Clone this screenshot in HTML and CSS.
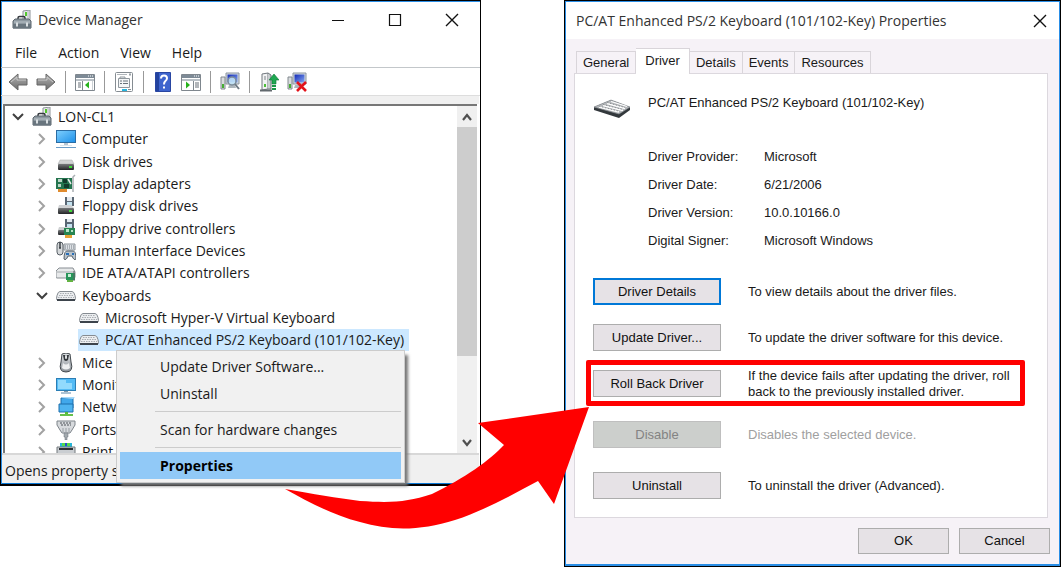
FILE: index.html
```html
<!DOCTYPE html>
<html lang="en">
<head>
<meta charset="utf-8">
<title>Device Manager</title>
<link rel="stylesheet" href="styles.css">
</head>
<body>
<svg class="defs" aria-hidden="true">
  <defs>
    <linearGradient id="gMetal" x1="0" y1="0" x2="0" y2="1"><stop offset="0" stop-color="#dfe3e6"/><stop offset="1" stop-color="#8b9197"/></linearGradient>
    <linearGradient id="gDark" x1="0" y1="0" x2="0" y2="1"><stop offset="0" stop-color="#77797b"/><stop offset="1" stop-color="#222426"/></linearGradient>
    <linearGradient id="gScreen" x1="0" y1="0" x2="1" y2="1"><stop offset="0" stop-color="#7fd0ff"/><stop offset="1" stop-color="#1c8fe8"/></linearGradient>
    <linearGradient id="gNavy" x1="0" y1="0" x2="1" y2="1"><stop offset="0" stop-color="#1229b5"/><stop offset="1" stop-color="#86a8f2"/></linearGradient>
    <linearGradient id="gArrow" x1="0" y1="0" x2="0" y2="1"><stop offset="0" stop-color="#b4b4b4"/><stop offset="1" stop-color="#6b6b6b"/></linearGradient>
  </defs>
  <symbol id="i-box" viewBox="0 0 20 20">
    <path d="M11 1l7-1v14h-7z" fill="#e9ebed" stroke="#8d9398"/><path d="M13 2h2v4h-2z" fill="#52c82c"/><path d="M16 1v12" stroke="#b5babd"/>
    <path d="M6 10V8q0-1.500 1.500-1.500h4Q13 6.500 13 8v2" fill="none" stroke="#34393e" stroke-width="1.500"/>
    <path d="M1 11l2-2h14l2 2v7H1z" fill="#8d98a0" stroke="#5d666e"/><path d="M2 12h16" stroke="#b9c2c8"/><path d="M1 14h18v4.500H1z" fill="#69757e"/><path d="M4 12.500h2v4H4zM14 12.500h2v4h-2z" fill="#dadfe2"/>
  </symbol>
  <symbol id="i-pc" viewBox="0 0 20 20">
    <rect x=".5" y="1.500" width="19" height="12" fill="url(#gScreen)" stroke="#2b6ca3"/><path d="M8 14h4v2H8z" fill="#b7c6d3"/><path d="M4 16h12v1H4z" fill="#dce6ee"/><path d="M0 18h20v1H0z" fill="#6a9cc7"/>
  </symbol>
  <symbol id="i-disk" viewBox="0 0 20 20">
    <path d="M4 8h12l2 4H2z" fill="#d2d3d4" stroke="#a6a8aa" stroke-width=".5"/><rect x="2" y="12" width="16" height="6" rx="1" fill="url(#gDark)"/><path d="M13 14h3v2h-3z" fill="#41dc3a"/>
  </symbol>
  <symbol id="i-display" viewBox="0 0 20 20">
    <path d="M0 4h16v11H0z" fill="#24744e"/><path d="M2 5h4v3H2zM2 10h3v3H2z" fill="#bcd5c7"/><path d="M7 5h4v4H7zM8 10h5v4H8z" fill="#123c2c"/><path d="M12 5l3 5" stroke="#e4ece8" stroke-width="1.500"/><path d="M2 15h9v3H2z" fill="#e08b2e"/><path d="M19 1l-2 2v15" fill="none" stroke="#a9afb3" stroke-width="1.500"/>
  </symbol>
  <symbol id="i-fdd" viewBox="0 0 20 20">
    <path d="M9 1h9v9H9z" fill="#596673"/><path d="M11 1h5v4h-5z" fill="#e3eaf0"/><path d="M11 6h5v4h-5z" fill="#c3e2f0"/>
    <path d="M3 9h12l3 3H2z" fill="#cfd1d3"/><rect x="2" y="12" width="16" height="6" rx="1" fill="url(#gDark)"/><path d="M13 14h3v2h-3z" fill="#41dc3a"/>
  </symbol>
  <symbol id="i-fdc" viewBox="0 0 20 20">
    <path d="M9 0h9v9H9z" fill="#596673"/><path d="M11 0h5v3h-5z" fill="#e3eaf0"/><path d="M11 5h5v4h-5z" fill="#c3e2f0"/>
    <path d="M3 8h12l3 3H2z" fill="#cfd1d3"/><rect x="2" y="11" width="15" height="5" rx="1" fill="url(#gDark)"/><path d="M8 9h11v7H8z" fill="#278552"/><path d="M10 10h3v3h-3zM15 11h2v2h-2z" fill="#b6e4c6"/><path d="M9 16h7v3H9z" fill="#e7a335"/>
  </symbol>
  <symbol id="i-hid" viewBox="0 0 20 20">
    <path d="M8 3h11v6H8z" fill="#dde1e5" stroke="#8f969c"/><path d="M9 5h9M9 7h9" stroke="#747d84" stroke-dasharray="1 1"/>
    <rect x="1" y="1" width="6" height="13" rx="3" fill="#d5d8da" stroke="#596067"/><path d="M4 1v6M3 7h2" stroke="#3c4147" stroke-width="1.500"/>
    <path d="M8 18q0-9 4-8h4q4-1 4 8q-2 2-4-3h-4q-2 5-4 3z" fill="#b9c3cb" stroke="#566069"/><path d="M10 13h3M16 13h2" stroke="#286fb9" stroke-width="2"/>
  </symbol>
  <symbol id="i-ide" viewBox="0 0 20 20">
    <path d="M3 5h14l2 4v5q0 1-1 1H1q-1 0-1-1V8z" fill="#e7e9ea" stroke="#878d92"/><path d="M1 9h17" stroke="#a5aaae"/><path d="M10 10h9v7h-9z" fill="#28955a"/><path d="M12 11h3v3h-3z" fill="#c8eed6"/><path d="M18 8v10" stroke="#5c6569"/><path d="M11 17h6v2h-6z" fill="#63b343"/>
  </symbol>
  <symbol id="i-kbd" viewBox="0 0 20 20">
    <path d="M4 5.500h12q2 0 3 4l.5 3q0 2-2 2h-15q-2 0-2-2l.5-3q1-4 3-4z" fill="#eceef0" stroke="#858b91"/><path d="M4 7.500h12M3 9.500h14M2 11.500h16" stroke="#a9adb2" stroke-dasharray="1.500 1"/><path d="M1 14h18" stroke="#3d444c" stroke-width="2"/>
  </symbol>
  <symbol id="i-mouse" viewBox="0 0 20 20">
    <path d="M6 1q4-2 8 0l1 8q3 10-5 10T5 9z" fill="url(#gMetal)" stroke="#43484d"/><path d="M7 2l1 5q2 2 4 0l1-5" fill="#35393d"/><rect x="9" y="2" width="2" height="4" rx="1" fill="#dce0e2"/><path d="M7 10q3 3 6 0l1 5q-4 3-8 0z" fill="#eef0f1"/>
  </symbol>
  <symbol id="i-mon" viewBox="0 0 20 20">
    <rect x=".5" y="3.500" width="19" height="12" fill="#54bbf5" stroke="#2b7eb5"/><path d="M2 5h8v3h6v6H2z" fill="#92dafd"/><path d="M8 16h4v1H8z" fill="#8299aa"/><path d="M5 18h10" stroke="#5b87aa"/>
  </symbol>
  <symbol id="i-net" viewBox="0 0 20 20">
    <path d="M5 1h12v10H5z" fill="#41a8eb" stroke="#1c6eac"/><path d="M5 1l2-1h12l-2 2z" fill="#a5d9fa"/><path d="M3 7h14v8H3z" fill="#4fb4f0" stroke="#1c6eac"/><path d="M9 15h3v2H9z" fill="#56bc3a"/><path d="M4 17h13v2H4z" fill="#66c04a"/>
  </symbol>
  <symbol id="i-port" viewBox="0 0 20 20">
    <path d="M1 1h18v4l-3 5-2 3H6L4 10 1 5z" fill="#d7dadd" stroke="#7e858b"/><path d="M4 3h12M5 5h10" stroke="#4c5359" stroke-dasharray="2 1"/><path d="M7 8v4M10 8v4M13 8v4" stroke="#989fa4"/><path d="M8 13h4v4h-1v3H9v-3H8z" fill="#a2a9ae" stroke="#6b7278" stroke-width=".5"/>
  </symbol>
  <symbol id="i-print" viewBox="0 0 20 20">
    <path d="M4 1h12v4H4z" fill="#25b6d8"/><path d="M6 1h8v3H6z" fill="#53d94a"/><path d="M9 1h2v3H9z" fill="#254ccf"/><path d="M1 5h18v9H1z" fill="#c9cdd1" stroke="#72787d"/><path d="M3 6h14v2H3z" fill="#2b2f33"/>
  </symbol>
  <symbol id="i-back" viewBox="0 0 20 20"><path d="M1 10l9-8v5h9v6h-9v5z" fill="url(#gArrow)" stroke="#666" stroke-linejoin="round"/><path d="M3 10l6-5v3h9" fill="none" stroke="#c9c9c9"/></symbol>
  <symbol id="i-fwd" viewBox="0 0 20 20"><path d="M19 10l-9-8v5H1v6h9v5z" fill="url(#gArrow)" stroke="#666" stroke-linejoin="round"/><path d="M17 10l-6-5v3H2" fill="none" stroke="#c9c9c9"/></symbol>
  <symbol id="i-tree" viewBox="0 0 20 20"><path d="M.500 2.500h19v16H.500z" fill="#fff" stroke="#7f878e"/><path d="M1 3h18v3H1z" fill="#7d8a96"/><path d="M13 4h1M15 4h1M17 4h1" stroke="#fff"/><path d="M1 7h18v2H1z" fill="#b9c0c6"/><path d="M7.500 9v9" stroke="#7f878e"/><path d="M3 11h3M3 13h3M3 15h3" stroke="#666f77"/><path d="M14 9.500v7L10 13z" fill="#27b21c"/><path d="M17.500 9v9" stroke="#ccd1d5"/></symbol>
  <symbol id="i-pane" viewBox="0 0 20 20"><path d="M.500 2.500h19v16H.500z" fill="#fff" stroke="#7f878e"/><path d="M1 3h18v3H1z" fill="#7d8a96"/><path d="M13 4h1M15 4h1M17 4h1" stroke="#fff"/><path d="M1 7h18v2H1z" fill="#b9c0c6"/><path d="M12.500 9v9" stroke="#7f878e"/><path d="M14 11h4M14 13h4M14 15h4" stroke="#666f77"/><path d="M5 9.500v7L9 13z" fill="#27b21c"/></symbol>
  <symbol id="i-prop" viewBox="0 0 20 20"><rect x="1.500" y=".5" width="17" height="19" rx="1" fill="#fff" stroke="#858c92"/><path d="M3 2.500h10" stroke="#b0b6bb"/><path d="M15 1.500h2v2h-2z" fill="#9aa1a7"/><path d="M4.500 6.500h11v9h-11zM6 6V5h5v1" fill="#f4f6f7" stroke="#8f979d"/><path d="M6 9h2M9 9h5M6 11.500h2M9 11.500h5" stroke="#68727a"/><path d="M8 17h5v2H8z" fill="#24b5df"/><path d="M14 17.500h3" stroke="#858c92"/></symbol>
  <symbol id="i-help" viewBox="0 0 16 20"><path d="M.500.500h15v19H.500z" fill="#3e64cd" stroke="#2946a2"/><path d="M1 1h3v18H1z" fill="#23439f"/><path d="M6 6.500Q6 3.500 9 3.500t3 2.800Q12 8 10 9.500 9 10.500 9 12.500" fill="none" stroke="#fff" stroke-width="2"/><path d="M8 14.500h2v2H8z" fill="#fff"/></symbol>
  <symbol id="i-scan" viewBox="0 0 20 20"><path d="M6 1h13v11H6z" fill="#d5dbe1" stroke="#8b959e"/><path d="M7.500 2.500h10v8h-10z" fill="url(#gNavy)"/><path d="M9 13h6l1 3H8z" fill="#adb5bb"/><path d="M1 5h4v12H1z" fill="#d9dcde" stroke="#81888e"/><path d="M2 12h2v4H2z" fill="#46ae33"/><circle cx="12" cy="9" r="4" fill="#c5e7fa" fill-opacity=".85" stroke="#7b8c9a" stroke-width="1.500"/><path d="M15 12l4 5" stroke="#6f7a84" stroke-width="2"/></symbol>
  <symbol id="i-upd" viewBox="0 0 20 20"><path d="M3 2l6-1v16l-6 1z" fill="#f1f2f3" stroke="#70777d"/><path d="M9 1l3 2v14H9" fill="#c9cdd0" stroke="#70777d"/><path d="M5 5h2M5 7h2" stroke="#7c8389"/><path d="M5 12h2v3H5z" fill="#4dbe38"/><path d="M1 18.500h12" stroke="#62696e" stroke-width="2"/><path d="M15 2l5 6h-3v4h-4V8h-3z" fill="#20a852" stroke="#0e7335" stroke-width=".6"/><path d="M13 14h4M13 17h4" stroke="#199746" stroke-width="2"/></symbol>
  <symbol id="i-del" viewBox="0 0 20 20"><path d="M6 1h13v11H6z" fill="#d5dbe1" stroke="#8b959e"/><path d="M7.500 2.500h10v8h-10z" fill="url(#gNavy)"/><path d="M8 13h6v3H7z" fill="#adb5bb"/><path d="M1 5h4v12H1z" fill="#d9dcde" stroke="#81888e"/><path d="M2 12h2v4H2z" fill="#46ae33"/><path d="M10 10l9 9M19 10l-9 9" stroke="#e3131b" stroke-width="2.600"/></symbol>
  <symbol id="i-close" viewBox="0 0 14 14"><path d="M1 1l12 12M13 1L1 13" stroke="#111" stroke-width="1.400"/></symbol>
  <symbol id="c-right" viewBox="0 0 10 12"><path d="M2 1l5 5-5 5" fill="none" stroke="#a2a2a2" stroke-width="2"/></symbol>
  <symbol id="c-down" viewBox="0 0 12 10"><path d="M1 2l5 5 5-5" fill="none" stroke="#404040" stroke-width="2"/></symbol>
  <symbol id="c-up" viewBox="0 0 12 10"><path d="M2 8l4-5 4 5" fill="none" stroke="#505050" stroke-width="2.200"/></symbol>
</svg>

<main class="stage">
  <section class="window manager" aria-label="Device Manager">
    <header class="titlebar">
      <svg class="icon"><use href="#i-box"/></svg>
      <h1 class="title">Device Manager</h1>
      <div class="controls">
        <button class="ctl" aria-label="Minimize"><svg class="glyph" viewBox="0 0 14 14"><path d="M1 7.500h12" stroke="#111"/></svg></button>
        <button class="ctl" aria-label="Maximize"><svg class="glyph" viewBox="0 0 14 14"><path d="M1.500 1.500h11v11h-11z" fill="none" stroke="#111" stroke-width="1.200"/></svg></button>
        <button class="ctl" aria-label="Close"><svg class="glyph"><use href="#i-close"/></svg></button>
      </div>
    </header>
    <nav class="menubar">
      <button>File</button><button>Action</button><button>View</button><button>Help</button>
    </nav>
    <div class="toolbar">
      <button aria-label="Back"><svg class="icon"><use href="#i-back"/></svg></button>
      <button aria-label="Forward"><svg class="icon"><use href="#i-fwd"/></svg></button>
      <span class="divider"></span>
      <button aria-label="Show console tree"><svg class="icon"><use href="#i-tree"/></svg></button>
      <span class="divider"></span>
      <button aria-label="Properties"><svg class="icon"><use href="#i-prop"/></svg></button>
      <span class="divider"></span>
      <button aria-label="Help"><svg class="icon"><use href="#i-help"/></svg></button>
      <button aria-label="Show action pane"><svg class="icon"><use href="#i-pane"/></svg></button>
      <span class="divider"></span>
      <button aria-label="Scan for hardware changes"><svg class="icon"><use href="#i-scan"/></svg></button>
      <span class="divider"></span>
      <button aria-label="Update driver"><svg class="icon"><use href="#i-upd"/></svg></button>
      <button aria-label="Uninstall device"><svg class="icon"><use href="#i-del"/></svg></button>
    </div>
    <div class="viewport">
      <div class="clip">
      <ul class="tree">
        <li class="root"><svg class="chev"><use href="#c-down"/></svg><svg class="icon"><use href="#i-box"/></svg><span>LON-CL1</span></li>
        <li><svg class="chev"><use href="#c-right"/></svg><svg class="icon"><use href="#i-pc"/></svg><span>Computer</span></li>
        <li><svg class="chev"><use href="#c-right"/></svg><svg class="icon"><use href="#i-disk"/></svg><span>Disk drives</span></li>
        <li><svg class="chev"><use href="#c-right"/></svg><svg class="icon"><use href="#i-display"/></svg><span>Display adapters</span></li>
        <li><svg class="chev"><use href="#c-right"/></svg><svg class="icon"><use href="#i-fdd"/></svg><span>Floppy disk drives</span></li>
        <li><svg class="chev"><use href="#c-right"/></svg><svg class="icon"><use href="#i-fdc"/></svg><span>Floppy drive controllers</span></li>
        <li><svg class="chev"><use href="#c-right"/></svg><svg class="icon"><use href="#i-hid"/></svg><span>Human Interface Devices</span></li>
        <li><svg class="chev"><use href="#c-right"/></svg><svg class="icon"><use href="#i-ide"/></svg><span>IDE ATA/ATAPI controllers</span></li>
        <li><svg class="chev"><use href="#c-down"/></svg><svg class="icon"><use href="#i-kbd"/></svg><span>Keyboards</span></li>
        <li class="leaf"><svg class="icon"><use href="#i-kbd"/></svg><span>Microsoft Hyper-V Virtual Keyboard</span></li>
        <li class="leaf selected"><svg class="icon"><use href="#i-kbd"/></svg><span>PC/AT Enhanced PS/2 Keyboard (101/102-Key)</span></li>
        <li><svg class="chev"><use href="#c-right"/></svg><svg class="icon"><use href="#i-mouse"/></svg><span>Mice</span></li>
        <li><svg class="chev"><use href="#c-right"/></svg><svg class="icon"><use href="#i-mon"/></svg><span>Monitors</span></li>
        <li><svg class="chev"><use href="#c-right"/></svg><svg class="icon"><use href="#i-net"/></svg><span>Network</span></li>
        <li><svg class="chev"><use href="#c-right"/></svg><svg class="icon"><use href="#i-port"/></svg><span>Ports</span></li>
        <li><svg class="chev"><use href="#c-right"/></svg><svg class="icon"><use href="#i-print"/></svg><span>Print</span></li>
      </ul>
      </div>
      <div class="scrollbar">
        <button aria-label="Scroll up"><svg class="arrow"><use href="#c-up"/></svg></button>
        <div class="track"><div class="thumb"></div></div>
        <button aria-label="Scroll down"><svg class="arrow flip"><use href="#c-up"/></svg></button>
      </div>
    </div>
    <footer class="status">Opens property sheet</footer>
    <div class="context" role="menu">
      <button role="menuitem">Update Driver Software...</button>
      <button role="menuitem">Uninstall</button>
      <hr>
      <button role="menuitem">Scan for hardware changes</button>
      <hr>
      <button role="menuitem" class="default">Properties</button>
    </div>
  </section>

  <section class="window dialog" aria-label="Driver properties">
    <header class="titlebar">
      <h2 class="title">PC/AT Enhanced PS/2 Keyboard (101/102-Key) Properties</h2>
      <div class="controls"><button class="ctl" aria-label="Close"><svg class="glyph"><use href="#i-close"/></svg></button></div>
    </header>
    <div class="body">
      <div class="tabs" role="tablist">
        <button role="tab">General</button><button role="tab" class="active" aria-selected="true">Driver</button><button role="tab">Details</button><button role="tab">Events</button><button role="tab">Resources</button>
      </div>
      <div class="panel">
        <div class="device">
          <svg class="bigkbd" viewBox="0 0 38 20"><path d="M1 8l17-7 19 7v3l-11 8L1 11z" fill="#33383c"/><path d="M1 8l17-7 19 7-11 7z" fill="#b4b7ba" stroke="#8c9195" stroke-width=".6"/><path d="M6 8l20 5M10 6.500l20 5M14 4.500l18 5M18 2.500l16 5" stroke="#fff" stroke-width="1.300"/><path d="M6 7.200l20 5M10 5.500l20 5M14 3.500l18 5" stroke="#7f8488" stroke-width=".8" stroke-dasharray="1.500 1.500"/></svg>
          <span>PC/AT Enhanced PS/2 Keyboard (101/102-Key)</span>
        </div>
        <dl class="facts">
          <dt>Driver Provider:</dt><dd>Microsoft</dd>
          <dt>Driver Date:</dt><dd>6/21/2006</dd>
          <dt>Driver Version:</dt><dd>10.0.10166.0</dd>
          <dt>Digital Signer:</dt><dd>Microsoft Windows</dd>
        </dl>
        <div class="actions">
          <div class="action"><button class="btn focus" aria-describedby="d1">Driver Details</button><p id="d1">To view details about the driver files.</p></div>
          <div class="action"><button class="btn" aria-describedby="d2">Update Driver...</button><p id="d2">To update the driver software for this device.</p></div>
          <div class="action marked"><button class="btn" aria-describedby="d3">Roll Back Driver</button><p id="d3">If the device fails after updating the driver, roll<br>back to the previously installed driver.</p></div>
          <div class="action spaced off"><button class="btn" disabled aria-describedby="d4">Disable</button><p id="d4">Disables the selected device.</p></div>
          <div class="action spaced"><button class="btn" aria-describedby="d5">Uninstall</button><p id="d5">To uninstall the driver (Advanced).</p></div>
        </div>
      </div>
      <div class="confirm"><button class="btn">OK</button><button class="btn">Cancel</button></div>
    </div>
  </section>
  <svg class="pointer" viewBox="0 -82 305 125" aria-hidden="true"><path d="M0 0C28 5 52 9 75 12 108 14 122 13 147 5C180-11 205-29 219-44L193-66 304-82 269 15 253-8C225 7 198 22 170 31C135 42 105 42 75 33C47 26 22 12 0 0z" fill="#f00"/></svg>
</main>
</body>
</html>
```
FILE: styles.css
```css
* { box-sizing: border-box; }
body { margin: 0; background: #fff; color: #1a1a1a; font: 14px/20px "Open Sans", "Noto Sans", sans-serif; }
button { margin: 0; padding: 0; border: 0; background: none; color: inherit; font: inherit; }
h1, h2, p, ul, dl, dd { margin: 0; padding: 0; }
.defs { position: absolute; width: 0; height: 0; }
.stage { position: relative; display: grid; grid-template-columns: 481fr 83fr 497fr; align-items: start; min-height: 100vh; }
.window { position: relative; display: flex; flex-direction: column; min-width: 0; border: 1px solid #000; background: #fff; }
.icon { flex: none; width: 20px; height: 20px; }
.glyph { width: 14px; height: 14px; }

.titlebar { display: flex; align-items: center; height: 37px; border-top: 1px solid #2a8ee6; }
.title { flex: 1; white-space: nowrap; font-size: 14px; font-weight: 400; color: #333; }
.controls { display: flex; }
.ctl { display: flex; align-items: center; justify-content: center; }

.manager { grid-column: 1; height: 486px; border-bottom-width: 2px; box-shadow: inset 1px 0 #2a8ee6, inset 0 -1px #0a78d6; }
.manager .titlebar { gap: 6px; padding-left: 11px; }
.manager .ctl { width: 57px; height: 36px; }
.menubar { display: flex; gap: 21px; height: 30px; padding: 0 14px; border-bottom: 1px solid #c3c7ca; }
.toolbar { display: flex; align-items: center; gap: 8px; height: 28px; padding-left: 7px; border-bottom: 1px solid #ddd; }
.toolbar button { display: flex; }
.divider { width: 1px; height: 22px; margin: 0 1px; background: #999; }
.viewport { display: flex; flex: 1; min-height: 0; margin: 0 1px; padding: 8px 0 0 1px; background: linear-gradient(#f0f0f0 8px, #fff 8px); }
.clip { flex: 1; overflow: hidden; border: 2px solid #777; border-width: 2px 0 0 2px; }
.tree { display: grid; grid-auto-rows: 1fr; height: calc(100% + 10px); list-style: none; }
.tree li { display: flex; align-items: center; gap: 6px; min-height: 0; padding-left: 31px; white-space: nowrap; }
.tree .root { padding-left: 7px; }
.tree .leaf { width: max-content; margin-left: 73px; padding: 0 5px 0 1px; }
.tree .selected { background: #cce8ff; }
.chev { flex: none; width: 12px; height: 12px; margin-right: 2px; }
.scrollbar { display: flex; flex-direction: column; width: 20px; margin-right: 2px; border-top: 2px solid #777; background: #f0f0f0; }
.scrollbar button { display: flex; align-items: center; justify-content: center; height: 21px; }
.track { flex: 1; }
.thumb { height: 75%; background: #cdcdcd; }
.arrow { width: 12px; height: 10px; }
.flip { transform: rotate(180deg); }
.status { height: 30px; margin: 0 1px 1px; padding: 6px 3px; border-top: 2px solid #d8d8d8; background: #f0f0f0; }
.context { position: absolute; left: 115px; top: 349px; width: 289px; padding: 2px 3px 3px; border: 1px solid #ccc; background: #f1f1f1; box-shadow: 4px 4px 3px -1px #777; }
.context button { display: block; width: 100%; height: 27px; padding-left: 40px; text-align: left; }
.context hr { height: 1px; margin: 4px 0 4px 35px; border: 0; background: #ccc; }
.context .default { background: #91c9f7; color: #000; font-weight: 700; }

.dialog { grid-column: 3; min-height: 100vh; box-shadow: inset 1px 0 #2a8ee6, inset -1px 0 #2a8ee6, inset 0 -2px #2a8ee6; font: 13px/16px "Liberation Sans", Arial, sans-serif; }
.dialog .titlebar { height: 38px; padding: 0 13px 0 11px; font-family: "Open Sans", "Noto Sans", sans-serif; }
.body { display: flex; flex: 1; flex-direction: column; margin: 0 1px 2px; padding: 9px 9px 10px 8px; background: #f6f2f7; }
.tabs { display: flex; align-items: flex-end; padding-left: 2px; }
.tabs button { height: 22px; padding: 0 6px; border: 1px solid #d9d5da; border-width: 1px 1px 0 0; }
.tabs button:first-child { border-left-width: 1px; }
.tabs .active { position: relative; height: 26px; margin-bottom: -1px; padding: 0 9px 2px; border-left-width: 0; background: #fff; }
.panel { flex: 1; margin-right: 2px; padding: 19px 18px 14px; border: 1px solid #dcd8de; background: #fff; }
.device { display: flex; align-items: center; gap: 17px; height: 20px; }
.bigkbd { width: 38px; height: 20px; margin-top: 12px; }
.facts { display: grid; grid-template-columns: 116px 1fr; row-gap: 12px; margin: 36px 0 29px 55px; }
.action { position: relative; display: grid; grid-template-columns: 128px 1fr; grid-template-rows: 100%; column-gap: 27px; align-items: center; height: 27px; margin-bottom: 19px; }
.action p { white-space: nowrap; }
.action.spaced { margin-top: 24px; margin-bottom: 0; }
.action.marked { margin-bottom: 0; }
.marked::after { content: ""; position: absolute; inset: -10px 4px -9px -7px; border: 5px solid #f00; border-radius: 2px; }
.off { color: #a0a0a0; }
.btn { height: 27px; border: 1px solid #adadad; background: #e6e2e6; color: #111; }
.btn.focus { border: 2px solid #0078d7; }
.btn:disabled { border-color: #bfbfbf; background: #cccfcc; color: #838383; }
.confirm { display: flex; justify-content: flex-end; gap: 10px; padding-top: 10px; }
.confirm .btn { width: 91px; height: 26px; }
.pointer { position: absolute; left: 285px; top: 407px; width: 305px; height: 125px; pointer-events: none; }
```
